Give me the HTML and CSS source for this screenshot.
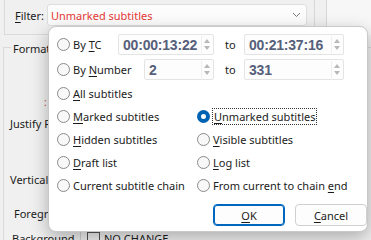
FILE: index.html
```html
<!DOCTYPE html>
<html lang="en">
<head>
    <meta charset="UTF-8">
    <meta name="viewport" content="width=device-width, initial-scale=1.0">
    <title>Subtitle Filter</title>
    <link rel="stylesheet" href="styles.css">
</head>
<body>
    <div class="window">
        <div class="topbar">
            <div class="filter-panel">
                <span class="filter-label"><u>F</u>ilter:</span>
                <div class="select">
                    <span class="select-text">Unmarked subtitles</span>
                    <svg class="chevron" width="9" height="6" viewBox="0 0 9 6"><path d="M1 1l3.5 3.5L8 1" fill="none" stroke="#777" stroke-width="1"/></svg>
                </div>
            </div>
            <div class="side-gap"></div>
            <div class="side-panel"></div>
        </div>

        <div class="format-group">
            <span class="group-title">Formatt</span>
            <span class="mark">:</span>
            <span class="bg-label justify">Justify P</span>
            <span class="bg-label vertical">Vertical</span>
            <span class="bg-label foreground">Foregr</span>
            <div class="bg-row">
                <span class="bg-label background">Background</span>
                <span class="checkbox-item"><span class="box"></span><span>NO CHANGE</span></span>
            </div>
        </div>
    </div>

    <!-- popup over the filter dropdown -->
    <div class="dialog">
        <div class="range-row">
            <label class="radio wide-tc"><span class="dot"></span><span>By <u>T</u>C</span></label>
            <div class="spin w96"><span class="value">00:00:13:22</span><span class="arrows"><i class="up"></i><i class="down"></i></span></div>
            <span class="to">to</span>
            <div class="spin w100"><span class="value">00:21:37:16</span><span class="arrows"><i class="up"></i><i class="down"></i></span></div>
        </div>
        <div class="range-row">
            <label class="radio wide-num"><span class="dot"></span><span>By <u>N</u>umber</span></label>
            <div class="spin w70"><span class="value">2</span><span class="arrows"><i class="up"></i><i class="down"></i></span></div>
            <span class="to">to</span>
            <div class="spin w100"><span class="value">331</span><span class="arrows"><i class="up"></i><i class="down"></i></span></div>
        </div>

        <div class="options">
            <label class="radio"><span class="dot"></span><span><u>A</u>ll subtitles</span></label>
            <span></span>
            <label class="radio"><span class="dot"></span><span><u>M</u>arked subtitles</span></label>
            <label class="radio"><span class="dot checked"></span><span class="focus"><u>U</u>nmarked subtitles</span></label>
            <label class="radio"><span class="dot"></span><span><u>H</u>idden subtitles</span></label>
            <label class="radio"><span class="dot"></span><span><u>V</u>isible subtitles</span></label>
            <label class="radio"><span class="dot"></span><span><u>D</u>raft list</span></label>
            <label class="radio"><span class="dot"></span><span><u>L</u>og list</span></label>
            <label class="radio"><span class="dot"></span><span>Current subtitle chain</span></label>
            <label class="radio"><span class="dot"></span><span>From current to chain <u>e</u>nd</span></label>
        </div>

        <div class="buttons">
            <button class="btn primary"><u>O</u>K</button>
            <button class="btn"><u>C</u>ancel</button>
        </div>
    </div>
</body>
</html>
```

FILE: styles.css
```css
body { margin: 0; width: 371px; height: 240px; overflow: hidden; background: #f0f0f0; font-family: "Noto Sans", "Open Sans", sans-serif; font-size: 11px; color: #1b1b1b; position: relative; }
u { text-decoration-thickness: 1px; text-underline-offset: 2px; }

.topbar { display: flex; height: 35px; }
.filter-panel { width: 310px; margin-left: 4px; border-left: 1px solid #dadada; border-bottom: 1px solid #dadada; display: flex; align-items: flex-start; padding-top: 4px; box-sizing: border-box; }
.filter-label { margin: 4px 0 0 10px; width: 32px; }
.select { width: 260px; height: 22px; box-sizing: border-box; background: #fcfcfc; border: 1px solid #dedede; border-radius: 3px; display: flex; align-items: center; justify-content: space-between; padding: 0 5px 0 3px; }
.select-text { color: #e53935; }
.side-gap { width: 11px; border-left: 1px solid #d8d8d8; border-right: 1px solid #d8d8d8; }
.side-panel { flex: 1; background: #f7f7f7; }

.format-group { margin: 12px 0 0 3px; border-left: 1px solid #dadada; border-top: 1px solid #dadada; height: 200px; display: flex; flex-direction: column; }
.group-title { margin: -7px 0 0 7px; background: #f0f0f0; padding: 0 2px; width: max-content; }
.mark { color: #c0504d; margin: 42px 0 0 40px; font-size: 10px; line-height: 8px; }
.bg-label { margin-left: 6px; }
.justify { margin-top: 10px; }
.vertical { margin-top: 41px; }
.foreground { margin-top: 19px; margin-left: 10px; }
.bg-row { display: flex; margin-top: 10px; }
.background { width: 68px; margin-left: 8px; border-right: 1px solid #cfcfcf; }
.checkbox-item { display: flex; align-items: center; gap: 4px; margin-left: 6px; }
.box { width: 11px; height: 11px; border: 1px solid #555; }

.dialog { position: absolute; left: 48px; top: 26px; width: 320px; height: 206px; box-sizing: border-box; background: #fff; border: 1px solid #c9c9c9; border-radius: 8px; box-shadow: 0 6px 18px rgba(0,0,0,0.28); padding: 7px 0 0 8px; }

.range-row { display: flex; align-items: center; height: 21px; margin-bottom: 4px; }
.wide-tc { width: 61px; }
.wide-num { width: 87px; }
.to { width: 19px; margin-left: 11px; }
.spin { height: 21px; box-sizing: border-box; border: 1px solid #e4e4e4; border-radius: 2px; display: flex; align-items: center; justify-content: space-between; padding: 0 3px 0 4px; background: #fdfdfd; }
.w96 { width: 96px; }
.w70 { width: 70px; }
.w100 { width: 100px; }
.value { font-family: "Liberation Sans", Arial, sans-serif; font-weight: bold; font-size: 14px; color: #56607a; letter-spacing: -0.2px; }
.arrows { display: flex; flex-direction: column; gap: 3px; border-left: 1px solid #efefef; padding-left: 2px; height: 17px; justify-content: center; }
.arrows i { width: 0; height: 0; border-left: 3px solid transparent; border-right: 3px solid transparent; }
.arrows .up { border-bottom: 4px solid #b8b8b8; }
.arrows .down { border-top: 4px solid #b8b8b8; }

.radio { display: flex; align-items: center; gap: 3px; white-space: nowrap; }
.dot { width: 11px; height: 11px; border: 1px solid #8a8a8a; border-radius: 50%; background: #f8f8f8; flex: none; }
.dot.checked { width: 5px; height: 5px; border: 4px solid #0063b1; background: #fff; }
.focus { outline: 1px dotted #333; outline-offset: 0; padding: 0 1px; }

.options { display: grid; grid-template-columns: 140px 1fr; grid-auto-rows: 23px; align-items: center; margin-top: -2px; }

.buttons { display: flex; gap: 10px; margin: 7px 0 0 156px; }
.btn { width: 73px; height: 22px; font-family: inherit; font-size: 11px; color: #1b1b1b; background: #fdfdfd; border: 1px solid #d0d0d0; border-radius: 4px; padding: 0; }
.btn.primary { border: 1px solid #0067c0; box-shadow: inset 0 0 0 1px #0067c0; }
```
